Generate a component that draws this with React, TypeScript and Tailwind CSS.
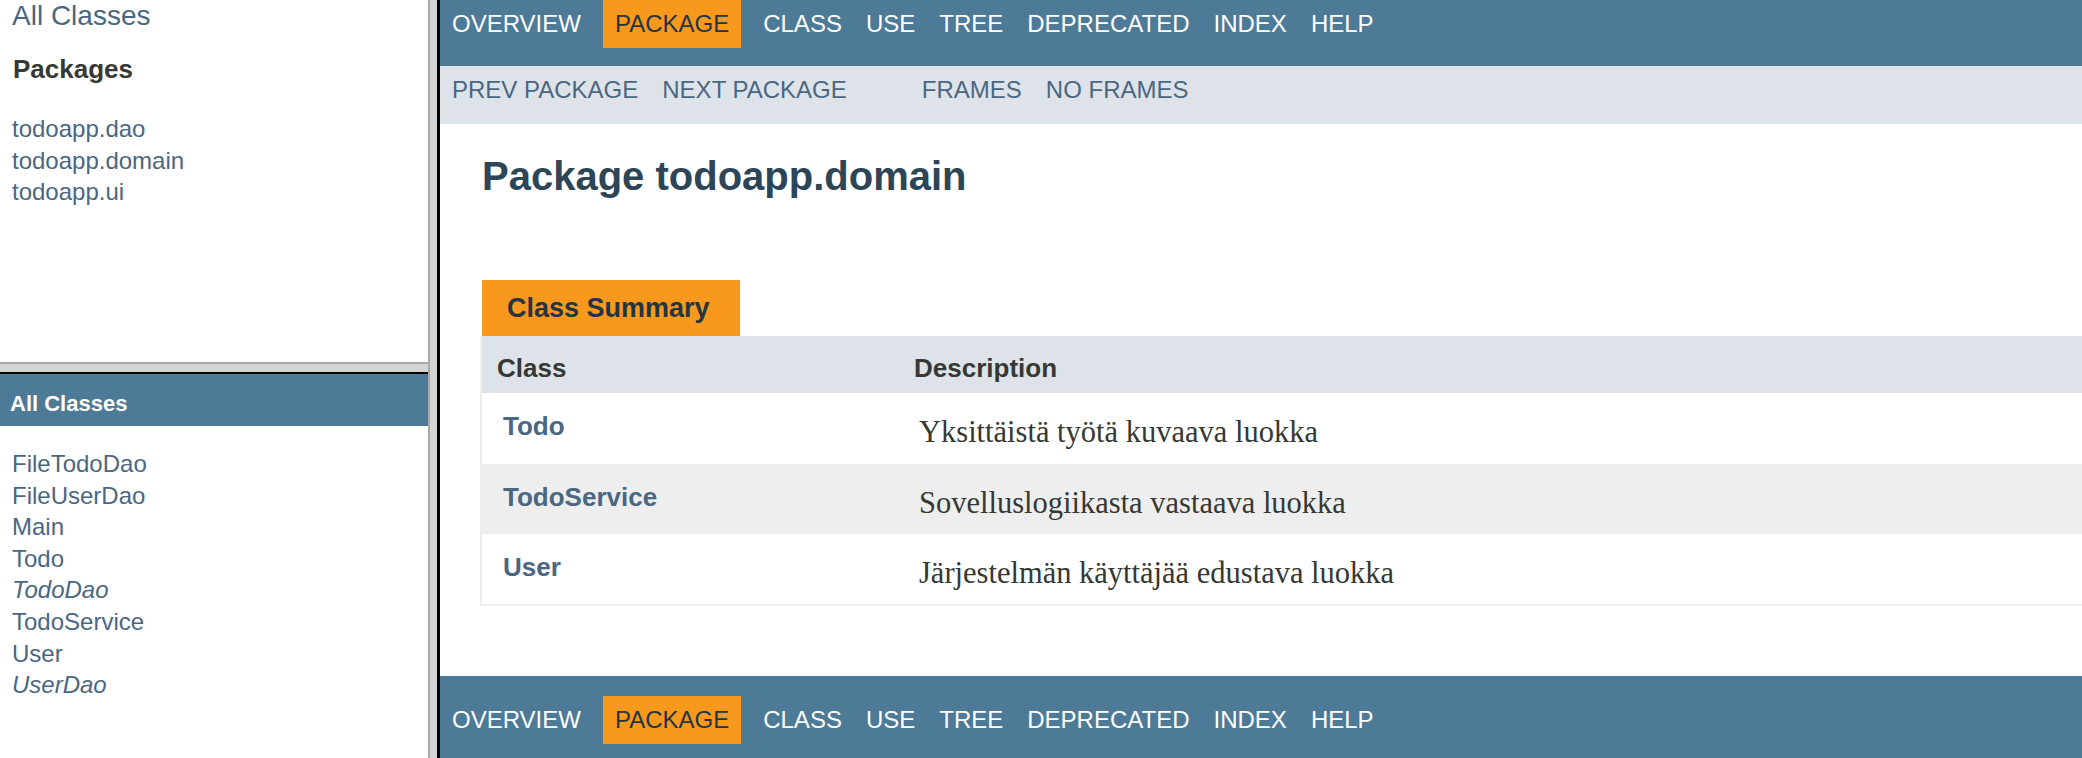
import React from "react";

const navItems = ["OVERVIEW", "PACKAGE", "CLASS", "USE", "TREE", "DEPRECATED", "INDEX", "HELP"];

const packages = ["todoapp.dao", "todoapp.domain", "todoapp.ui"];

const classes = [
  { name: "FileTodoDao", iface: false },
  { name: "FileUserDao", iface: false },
  { name: "Main", iface: false },
  { name: "Todo", iface: false },
  { name: "TodoDao", iface: true },
  { name: "TodoService", iface: false },
  { name: "User", iface: false },
  { name: "UserDao", iface: true },
];

const summary = [
  { name: "Todo", desc: "Yksittäistä työtä kuvaava luokka" },
  { name: "TodoService", desc: "Sovelluslogiikasta vastaava luokka" },
  { name: "User", desc: "Järjestelmän käyttäjää edustava luokka" },
];

function NavBar({ bottom }: { bottom?: boolean }) {
  return (
    <div className={bottom ? "bg-[#4D7A97] pt-[20px] h-full" : "bg-[#4D7A97] h-[66px] shrink-0"}>
      <ul className="flex text-[24px] leading-[48px] text-white">
        {navItems.map((item) =>
          item === "PACKAGE" ? (
            <li key={item} className="mx-[10px] h-[48px] bg-[#F8981D] px-[12px] text-[#253441]">
              {item}
            </li>
          ) : (
            <li key={item} className="px-[12px]">
              {item}
            </li>
          )
        )}
      </ul>
    </div>
  );
}

export default function App() {
  return (
    <div className="flex h-[758px] w-[2082px] overflow-hidden bg-white font-['Liberation_Sans',Arial,sans-serif]">
      {/* Left frames */}
      <aside className="flex w-[428px] shrink-0 flex-col">
        {/* overview frame */}
        <div className="h-[362px] shrink-0 pl-[12px]">
          <div className="text-[28px] leading-[32px] text-[#4A6782]">All Classes</div>
          <h2 className="mt-[22px] pl-[1px] text-[26px] font-bold leading-[30px] text-[#353833]">Packages</h2>
          <ul className="mt-[29px] text-[24px] leading-[31.5px] text-[#4A6782]">
            {packages.map((p) => (
              <li key={p}>{p}</li>
            ))}
          </ul>
        </div>
        <div className="h-[2px] shrink-0 bg-[#a9a9a9]" />
        <div className="h-[8px] shrink-0 bg-[#d4d4d4]" />
        <div className="h-[2px] shrink-0 bg-black" />

        {/* all classes frame */}
        <div className="flex-1">
          <div className="h-[52px] bg-[#4D7A97] pl-[10px] pt-[15px] text-[22px] font-bold leading-[30px] text-white">
            All Classes
          </div>
          <ul className="mt-[22px] pl-[12px] text-[24px] leading-[31.6px] text-[#4A6782]">
            {classes.map((c) => (
              <li key={c.name} className={c.iface ? "italic" : ""}>
                {c.name}
              </li>
            ))}
          </ul>
        </div>
      </aside>

      {/* frame divider */}
      <div className="flex shrink-0">
        <div className="w-[2px] bg-[#a9a9a9]" />
        <div className="w-[7px] bg-[#d4d4d4]" />
        <div className="w-[3px] bg-black" />
      </div>

      {/* Content frame */}
      <main className="flex min-w-0 flex-1 flex-col">
        <NavBar />
        <div className="h-[58px] shrink-0 bg-[#DEE3E9]">
          <div className="flex text-[24px] leading-[48px] text-[#4A6782]">
            <ul className="flex">
              <li className="px-[12px]">PREV PACKAGE</li>
              <li className="px-[12px]">NEXT PACKAGE</li>
            </ul>
            <ul className="ml-[51px] flex">
              <li className="px-[12px]">FRAMES</li>
              <li className="px-[12px]">NO FRAMES</li>
            </ul>
          </div>
        </div>

        <div className="shrink-0 pl-[40px]">
          <h1 className="mt-[28px] pl-[2px] text-[40px] font-bold leading-[48px] text-[#2C4557]">
            Package todoapp.domain
          </h1>

          <div className="mt-[80px]">
            <div className="ml-[2px] h-[56px] w-[258px] bg-[#F8981D] pl-[25px] pt-[12px] text-[27px] font-bold leading-[32px] text-[#253441]">
              Class Summary
            </div>
            <div className="border-b-[2px] border-l-[2px] border-[#EEEEEE]">
              <div className="grid h-[57px] grid-cols-[417px_1fr] bg-[#DEE3E9] pt-[16px] text-[26px] font-bold leading-[32px] text-[#353833]">
                <div className="pl-[15px]">Class</div>
                <div className="pl-[15px]">Description</div>
              </div>
              {summary.map((row, i) => (
                <div
                  key={row.name}
                  className={`grid grid-cols-[417px_1fr] ${i === 0 ? "h-[71px]" : "h-[70px]"} ${i === 1 ? "bg-[#EEEEEE]" : "bg-white"}`}
                >
                  <div className="pl-[21px] pt-[17px] text-[26px] font-bold leading-[32px] text-[#4A6782]">
                    {row.name}
                  </div>
                  <div className="pl-[20px] pt-[21px] font-['Liberation_Serif',Georgia,serif] text-[30.5px] leading-[36px] text-[#353833]">
                    {row.desc}
                  </div>
                </div>
              ))}
            </div>
          </div>
        </div>

        <div className="mt-[70px] flex-1">
          <NavBar bottom />
        </div>
      </main>
    </div>
  );
}
